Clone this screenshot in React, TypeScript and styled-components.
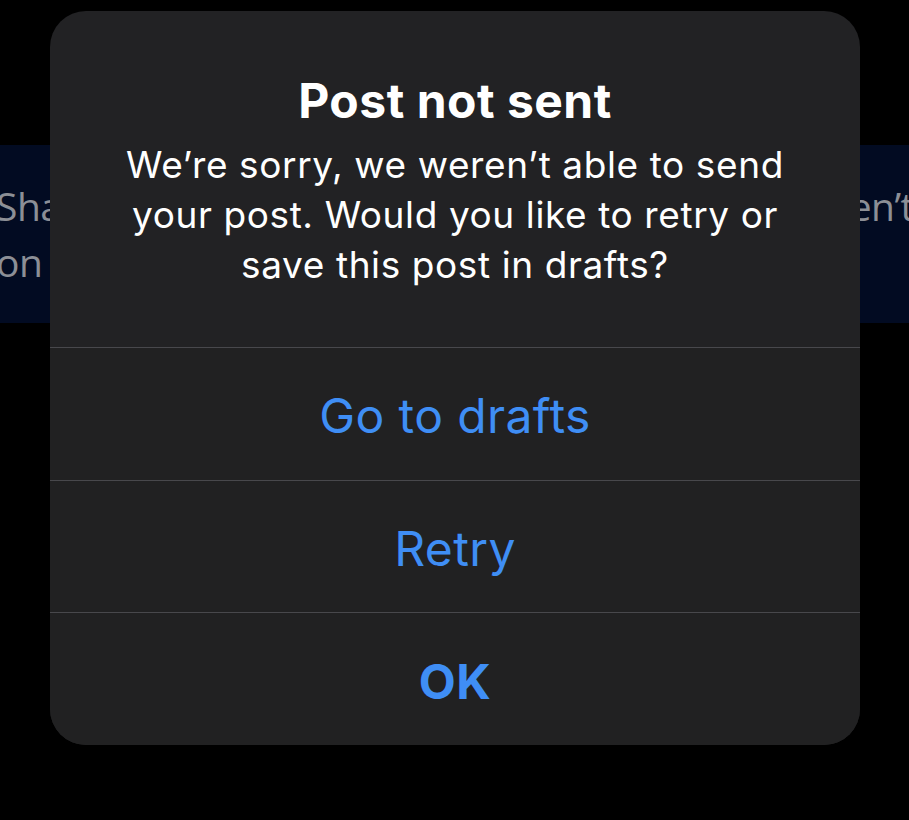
import styled, { createGlobalStyle } from 'styled-components';

const GlobalStyle = createGlobalStyle`
  html, body {
    margin: 0;
    padding: 0;
    background: #000;
  }
  body {
    font-family: Inter, "Noto Sans", "Liberation Sans", sans-serif;
    -webkit-font-smoothing: antialiased;
  }
`;

const Screen = styled.div`
  position: relative;
  width: 909px;
  height: 820px;
  overflow: hidden;
  background: #000;
`;

// the notice banner that sits behind the alert
const Banner = styled.div`
  margin-top: 145px;
  margin-left: -4px;
  width: 918px;
  height: 178px;
  background: #020b22;
  display: flex;
  flex-direction: column;
  justify-content: center;
  color: #8c8f96;
  font-family: "Open Sans", "Noto Sans", sans-serif;
  font-size: 39px;
  line-height: 56px;
  letter-spacing: -0.5px;
  white-space: nowrap;
`;

const BannerLine = styled.div`
  display: flex;
  justify-content: space-between;
`;

const Alert = styled.div`
  position: absolute;
  left: 50px;
  top: 11px;
  width: 810px;
  height: 734px;
  border-radius: 36px;
  background: #222224;
  display: flex;
  flex-direction: column;
  overflow: hidden;
`;

const Header = styled.div`
  height: 336px;
  display: flex;
  flex-direction: column;
  align-items: center;
  padding-top: 62px;
  box-sizing: border-box;
  text-align: center;
  color: #fff;
`;

const Title = styled.div`
  font-size: 48px;
  font-weight: 700;
  line-height: 56px;
  letter-spacing: 0.5px;
  margin-bottom: 11px;
`;

const Message = styled.div`
  font-size: 37px;
  font-weight: 400;
  line-height: 50px;
  letter-spacing: 0.6px;
  white-space: nowrap;
`;

const Action = styled.button<{ $bold?: boolean }>`
  flex: 1;
  display: flex;
  align-items: center;
  justify-content: center;
  border: 0;
  border-top: 1px solid #48484c;
  background: #212122;
  color: #3f8ef5;
  font-family: inherit;
  font-size: 48px;
  font-weight: ${(p) => (p.$bold ? 700 : 400)};
  letter-spacing: 0.4px;
  padding: 4px 0 0;
  cursor: pointer;
`;

export default function App(): JSX.Element {
  return (
    <Screen>
      <GlobalStyle />
      <Banner>
        <BannerLine>
          <span>Sharing your post failed. We weren’t</span>
          <span>en’t</span>
        </BannerLine>
        <BannerLine>
          <span>on X right now.</span>
        </BannerLine>
      </Banner>
      <Alert>
        <Header>
          <Title>Post not sent</Title>
          <Message>
            We’re sorry, we weren’t able to send
            <br />
            your post. Would you like to retry or
            <br />
            save this post in drafts?
          </Message>
        </Header>
        <Action>Go to drafts</Action>
        <Action>Retry</Action>
        <Action $bold>OK</Action>
      </Alert>
    </Screen>
  );
}
